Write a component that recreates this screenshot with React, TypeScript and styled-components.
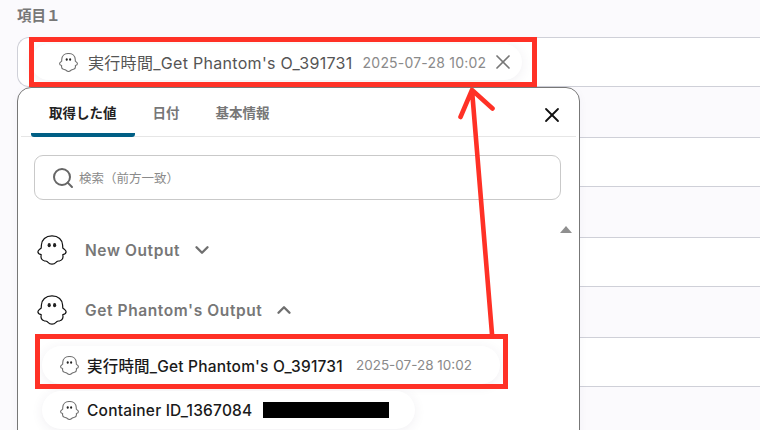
import React from "react";
import styled, { createGlobalStyle } from "styled-components";
import { Search, X, ChevronDown, ChevronUp } from "lucide-react";

const GlobalStyle = createGlobalStyle`
	html, body {
		margin: 0;
		padding: 0;
		width: 760px;
		height: 430px;
		overflow: hidden;
		background: #fbfafd;
		font-family: "Inter", "Noto Sans CJK JP", sans-serif;
	}
`;

function Ghost({ size, muted }: { size: number; muted?: boolean }) {
	return (
		<svg width={size} height={size} viewBox="0 0 30 30" style={{ flexShrink: 0 }}>
			<path
				d="M15 .8C8.6 .8 4.6 4.8 4.4 10L4.2 13C3 14.2 .9 15 .9 16.8C.9 18.4 2.4 19.4 4.2 19.6C3.6 22.4 4.6 25 7.2 25.8C8.4 26.1 9.4 26 10.4 26.8C12 28.4 13.4 29.2 15 29.2C16.6 29.2 18 28.4 19.6 26.8C20.6 26 21.6 26.1 22.8 25.8C25.4 25 26.4 22.4 25.8 19.6C27.6 19.4 29.1 18.4 29.1 16.8C29.1 15 27 14.2 25.8 13L25.6 10C25.4 4.8 21.4 .8 15 .8Z"
				fill="#fff"
				stroke={muted ? "#6f6f6f" : "#111"}
				strokeWidth={muted ? 1.7 : 1.2}
				strokeLinejoin="round"
			/>
			<ellipse cx="12.2" cy="10.2" rx="1.6" ry="2.1" fill="#222" />
			<ellipse cx="17.6" cy="10.2" rx="1.6" ry="2.1" fill="#222" />
		</svg>
	);
}

export default function App() {
	return (
		<Page>
			<GlobalStyle />
			<FieldLabel>{"項目\uFF11"}</FieldLabel>
			<Fields>
				<Field>
					<Chip $width={491} $height={36} $indent={28}>
						<Ghost size={19} muted />
						<ChipName $muted>実行時間_Get Phantom's O_391731</ChipName>
						<ChipDate $muted>2025-07-28 10:02</ChipDate>
						<ChipClose>
							<X size={24} strokeWidth={1.7} />
						</ChipClose>
					</Chip>
				</Field>
				<Field />
				<Field />
				<Field />
			</Fields>

			<Popup>
				<Tabs>
					<Tab $active>取得した値</Tab>
					<Tab>日付</Tab>
					<Tab>基本情報</Tab>
					<CloseButton>
						<X size={24} strokeWidth={1.8} />
					</CloseButton>
				</Tabs>
				<Body>
					<SearchBox>
						<Search size={24} strokeWidth={2} color="#666" />
						<SearchText>{"検索\uFF08前方一致\uFF09"}</SearchText>
					</SearchBox>
					<ScrollUp />
					<Group>
						<Ghost size={30} />
						<GroupName>New Output</GroupName>
						<ChevronDown size={22} strokeWidth={2.6} color="#6f6f6f" />
					</Group>
					<Group>
						<Ghost size={30} />
						<GroupName>Get Phantom's Output</GroupName>
						<ChevronUp size={22} strokeWidth={2.6} color="#6f6f6f" />
					</Group>
					<Items>
						<Chip $width={458} $height={38} $indent={18}>
							<Ghost size={19} muted />
							<ChipName>実行時間_Get Phantom's O_391731</ChipName>
							<ChipDate>2025-07-28 10:02</ChipDate>
						</Chip>
						<Chip $width={373} $height={38} $indent={18}>
							<Ghost size={19} muted />
							<ChipName>Container ID_1367084</ChipName>
							<Redacted />
						</Chip>
					</Items>
				</Body>
			</Popup>

			<Highlight $left={29} $top={37} $width={508} $height={50} />
			<Highlight $left={35} $top={334} $width={473} $height={55} />
			<Arrow width="760" height="430" viewBox="0 0 760 430">
				<path
					d="M492 334L472 90M472 90L460.5 117M472 90L492.5 108.5"
					fill="none"
					stroke="#ff3126"
					strokeWidth="4.6"
					strokeLinecap="round"
				/>
			</Arrow>
		</Page>
	);
}

const Page = styled.div`
	position: relative;
	width: 760px;
	height: 430px;
	overflow: hidden;
	padding: 7px 0 0 17px;
	box-sizing: border-box;
`;

const FieldLabel = styled.div`
	height: 30px;
	font-size: 14.5px;
	line-height: 18px;
	font-weight: 600;
	color: #777;
`;

const Fields = styled.div`
	display: flex;
	flex-direction: column;
	gap: 50px;
	width: 900px;
`;

const Field = styled.div`
	display: flex;
	align-items: center;
	height: 50px;
	box-sizing: border-box;
	padding-left: 13px;
	background: #fff;
	border: 1px solid #cfd0d8;
	border-right: none;
	border-radius: 12px 0 0 12px;
`;

const Chip = styled.div<{ $width: number; $height: number; $indent: number }>`
	display: flex;
	align-items: center;
	width: ${(p) => p.$width}px;
	height: ${(p) => p.$height}px;
	box-sizing: border-box;
	padding-left: ${(p) => p.$indent}px;
	background: #fff;
	border-radius: 19px;
	box-shadow: 0 2px 12px rgba(60, 50, 90, 0.08);
`;

const ChipName = styled.span<{ $muted?: boolean }>`
	margin-left: ${(p) => (p.$muted ? 10 : 8)}px;
	font-size: ${(p) => (p.$muted ? 16 : 15.5)}px;
	letter-spacing: ${(p) => (p.$muted ? 0.3 : 0.2)}px;
	font-weight: ${(p) => (p.$muted ? 400 : 500)};
	color: ${(p) => (p.$muted ? "#555" : "#1a1a1a")};
	white-space: nowrap;
`;

const ChipDate = styled.span<{ $muted?: boolean }>`
	margin-left: ${(p) => (p.$muted ? 10 : 13)}px;
	font-size: ${(p) => (p.$muted ? 14 : 13.5)}px;
	letter-spacing: ${(p) => (p.$muted ? 0.2 : 0)}px;
	color: #8a8a8a;
	white-space: nowrap;
`;

const ChipClose = styled.span`
	display: flex;
	margin-left: 5px;
	color: #777;
`;

const Redacted = styled.span`
	width: 126px;
	height: 16px;
	margin-left: 11px;
	background: #000;
`;

const Popup = styled.div`
	position: absolute;
	left: 17px;
	top: 87px;
	width: 563px;
	height: 360px;
	box-sizing: border-box;
	background: #fff;
	border: 1px solid #777;
	border-radius: 14px 14px 0 0;
	box-shadow: 0 2px 10px rgba(60, 50, 90, 0.04);
`;

const Tabs = styled.div`
	display: flex;
	height: 49px;
	margin: 0 3px;
	padding-left: 10px;
	box-sizing: border-box;
	border-bottom: 1px solid #e6e6e6;
`;

const Tab = styled.div<{ $active?: boolean }>`
	display: flex;
	align-items: center;
	padding: 3px 18px 0;
	height: 49px;
	box-sizing: border-box;
	font-size: 13.5px;
	font-weight: 600;
	color: ${(p) => (p.$active ? "#222" : "#777")};
	border-bottom: 4px solid ${(p) => (p.$active ? "#005f85" : "transparent")};
	border-radius: 0 0 3px 3px;
`;

const CloseButton = styled.div`
	display: flex;
	margin: 6px 12px 0 auto;
	align-self: center;
	color: #111;
`;

const Body = styled.div`
	position: relative;
	padding: 18px 18px 0 16px;
`;

const SearchBox = styled.div`
	display: flex;
	align-items: center;
	gap: 4px;
	height: 45px;
	width: 527px;
	box-sizing: border-box;
	padding-left: 16px;
	border: 1px solid #c9c9c9;
	border-radius: 9px;
	margin-bottom: 35px;
`;

const SearchText = styled.span`
	font-size: 12.5px;
	color: #8a8a8a;
`;

const ScrollUp = styled.div`
	position: absolute;
	right: 7px;
	top: 89px;
	width: 0;
	height: 0;
	border-left: 6.5px solid transparent;
	border-right: 6.5px solid transparent;
	border-bottom: 7px solid #8f8f8f;
`;

const Group = styled.div`
	display: flex;
	align-items: center;
	height: 30px;
	margin: 0 0 30px 3px;
`;

const GroupName = styled.span`
	margin: 0 11px 0 18px;
	font-size: 15.5px;
	font-weight: 600;
	color: #777;
	letter-spacing: 0.6px;
`;

const Items = styled.div`
	display: flex;
	flex-direction: column;
	gap: 7px;
	margin: -9px 0 0 8px;
`;

const Highlight = styled.div<{ $left: number; $top: number; $width: number; $height: number }>`
	position: absolute;
	left: ${(p) => p.$left}px;
	top: ${(p) => p.$top}px;
	width: ${(p) => p.$width}px;
	height: ${(p) => p.$height}px;
	box-sizing: border-box;
	border: 5px solid #ff3126;
`;

const Arrow = styled.svg`
	position: absolute;
	left: 0;
	top: 0;
`;
